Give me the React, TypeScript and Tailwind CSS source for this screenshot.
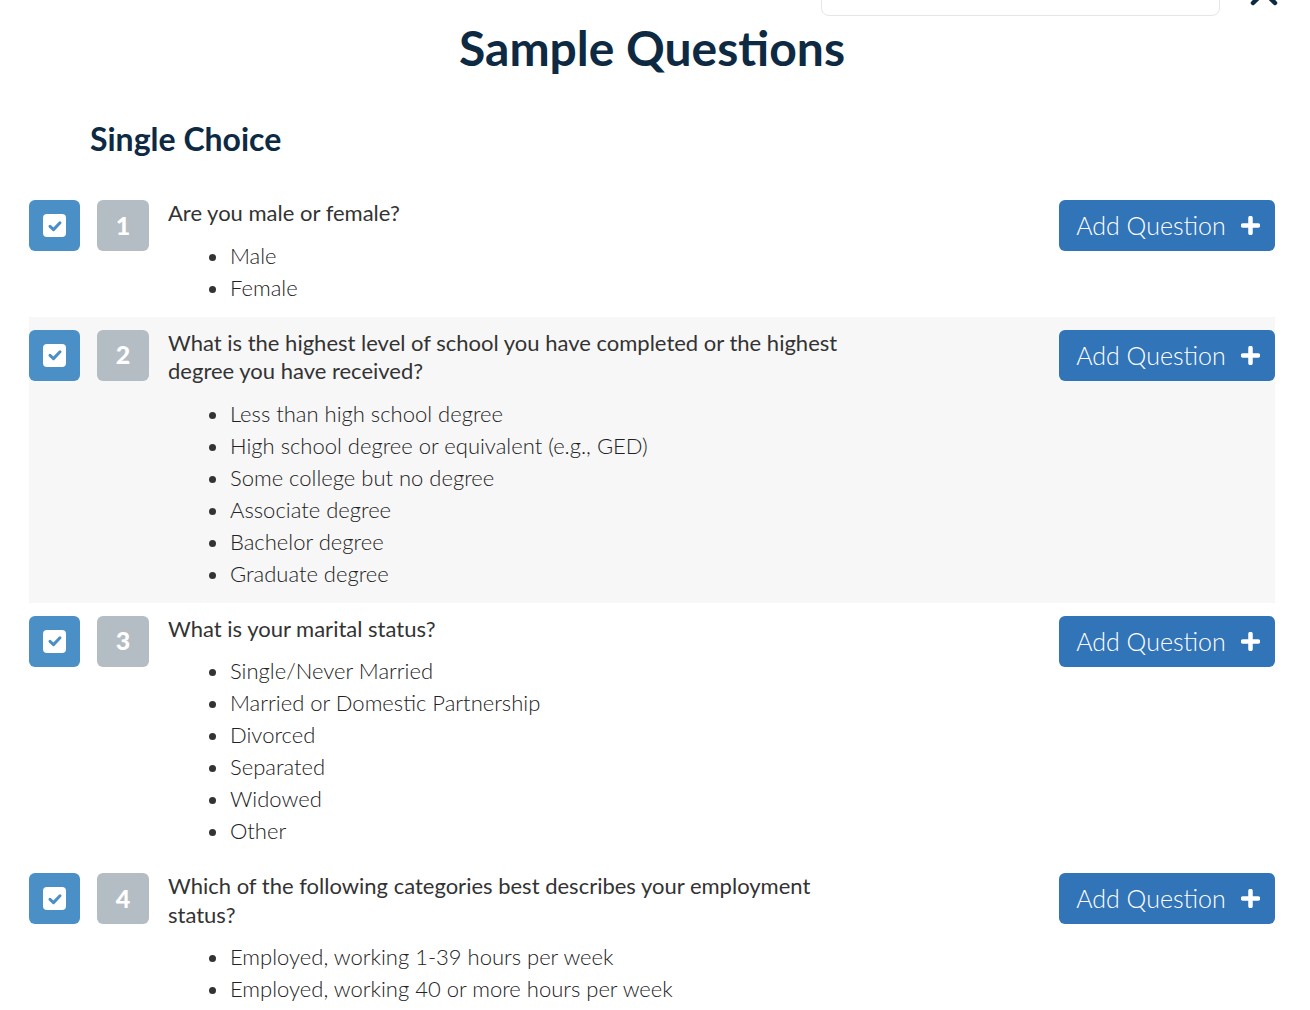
import React from "react";

type Q = { n: number; q: string; opts: string[]; shaded?: boolean };

const questions: Q[] = [
  { n: 1, q: "Are you male or female?", opts: ["Male", "Female"] },
  {
    n: 2,
    q: "What is the highest level of school you have completed or the highest degree you have received?",
    opts: [
      "Less than high school degree",
      "High school degree or equivalent (e.g., GED)",
      "Some college but no degree",
      "Associate degree",
      "Bachelor degree",
      "Graduate degree",
    ],
    shaded: true,
  },
  {
    n: 3,
    q: "What is your marital status?",
    opts: [
      "Single/Never Married",
      "Married or Domestic Partnership",
      "Divorced",
      "Separated",
      "Widowed",
      "Other",
    ],
  },
  {
    n: 4,
    q: "Which of the following categories best describes your employment status?",
    opts: ["Employed, working 1-39 hours per week", "Employed, working 40 or more hours per week"],
  },
];

function CheckIcon() {
  return (
    <div className="w-[23px] h-[23px] rounded-[4px] bg-white flex items-center justify-center">
      <svg width="16" height="16" viewBox="0 0 16 16">
        <path d="M3 8.3 L6.5 11.6 L13 4.8" fill="none" stroke="#4b8fc7" strokeWidth="3" strokeLinecap="round" strokeLinejoin="round" />
      </svg>
    </div>
  );
}

function Row({ q }: { q: Q }) {
  return (
    <div className={`flex items-start py-[13px] ${q.shaded ? "bg-[#f7f7f7]" : ""}`}>
      <div className="w-[51px] h-[51px] rounded-[6px] bg-[#4b8fc7] flex items-center justify-center shrink-0">
        <CheckIcon />
      </div>
      <div className="ml-[17px] w-[52px] h-[51px] rounded-[6px] bg-[#b4bcc4] flex items-center justify-center shrink-0 text-white font-black text-[25px]">
        {q.n}
      </div>
      <div className="ml-[19px] flex-1">
        <div className="w-[690px] text-[22px] leading-[28.5px] text-[#333333] -mt-[1px]">{q.q}</div>
        <ul className="mt-[12px] list-disc pl-[62px] text-[22px] leading-[32px] font-light text-[#222222] marker:text-[#333333]">
          {q.opts.map((o) => (
            <li key={o}>{o}</li>
          ))}
        </ul>
      </div>
      <button className="shrink-0 w-[216px] h-[51px] rounded-[6px] bg-[#3174b7] text-white flex items-center justify-center gap-[15px] pl-[2px]">
        <span className="text-[25px] leading-none font-light">Add Question</span>
        <svg width="19" height="19" viewBox="0 0 19 19">
          <path d="M9.5 2 V17 M2 9.5 H17" stroke="white" strokeWidth="4.5" strokeLinecap="round" />
        </svg>
      </button>
    </div>
  );
}

export default function App() {
  return (
    <div className="w-[1310px] h-[1010px] overflow-hidden bg-white" style={{ fontFamily: "Lato, 'Open Sans', sans-serif" }}>
      <div className="flex items-start h-[16px]">
        <div className="ml-[821px] mt-[-24px] w-[399px] h-[40px] rounded-[8px] border border-[#e6e6e6] bg-white" />
        <svg className="ml-[30px] mt-[-22px]" width="28" height="28" viewBox="0 0 28 28">
          <path d="M3 3 L25 25 M25 3 L3 25" stroke="#0e2a43" strokeWidth="4.5" strokeLinecap="round" />
        </svg>
      </div>
      <h1 className="text-center pr-[6px] text-[48px] leading-[56px] font-bold text-[#0e2a43] mt-[4px]">Sample Questions</h1>
      <h2 className="ml-[90px] mt-[43px] text-[32px] leading-[40px] font-bold text-[#0e2a43]">Single Choice</h2>
      <div className="ml-[29px] mr-[35px] mt-[28px]">
        {questions.map((q) => (
          <Row key={q.n} q={q} />
        ))}
      </div>
    </div>
  );
}
